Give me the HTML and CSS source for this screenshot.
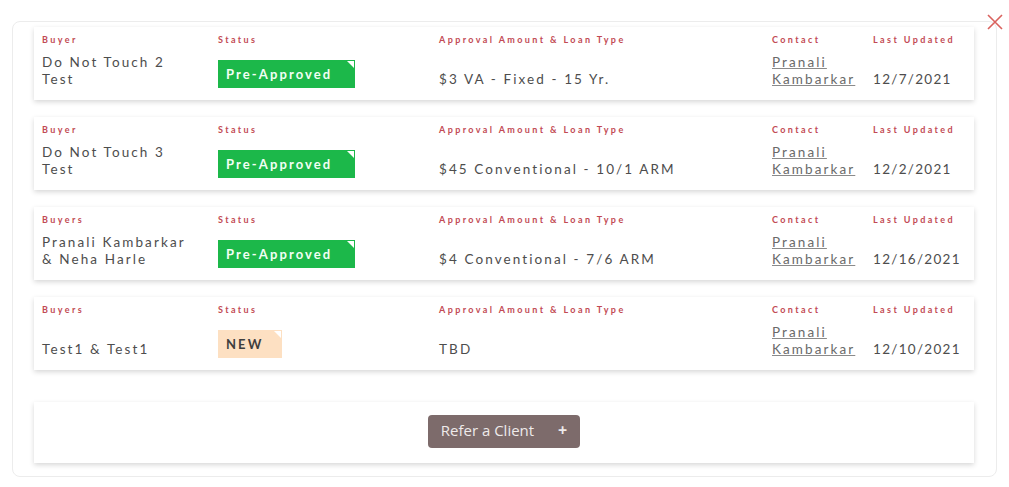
FILE: index.html
```html
<!DOCTYPE html>
<html lang="en">
    <head>
        <meta charset="UTF-8">
        <title>Referrals</title>
        <link rel="stylesheet" href="styles.css">
    </head>
    <body>
        <div class="modal">
            <button class="close-btn" aria-label="Close">
                <svg width="16" height="16" viewBox="0 0 16 16"><path d="M1 1L15 15M15 1L1 15" stroke="#d9625e" stroke-width="1.6" fill="none"/></svg>
            </button>

            <section class="loan-list">
                <div class="loan">
                    <div class="cell">
                        <span class="label">Buyer</span>
                        <span class="value">Do Not Touch 2<br>Test</span>
                    </div>
                    <div class="cell">
                        <span class="label">Status</span>
                        <span class="badge badge-approved">Pre-Approved</span>
                    </div>
                    <div class="cell">
                        <span class="label">Approval Amount &amp; Loan Type</span>
                        <span class="value">$3 VA - Fixed - 15 Yr.</span>
                    </div>
                    <div class="cell">
                        <span class="label">Contact</span>
                        <a class="value contact" href="#">Pranali<br>Kambarkar</a>
                    </div>
                    <div class="cell">
                        <span class="label">Last Updated</span>
                        <span class="value date">12/7/2021</span>
                    </div>
                </div>

                <div class="loan">
                    <div class="cell">
                        <span class="label">Buyer</span>
                        <span class="value">Do Not Touch 3<br>Test</span>
                    </div>
                    <div class="cell">
                        <span class="label">Status</span>
                        <span class="badge badge-approved">Pre-Approved</span>
                    </div>
                    <div class="cell">
                        <span class="label">Approval Amount &amp; Loan Type</span>
                        <span class="value">$45 Conventional - 10/1 ARM</span>
                    </div>
                    <div class="cell">
                        <span class="label">Contact</span>
                        <a class="value contact" href="#">Pranali<br>Kambarkar</a>
                    </div>
                    <div class="cell">
                        <span class="label">Last Updated</span>
                        <span class="value date">12/2/2021</span>
                    </div>
                </div>

                <div class="loan">
                    <div class="cell">
                        <span class="label">Buyers</span>
                        <span class="value">Pranali Kambarkar<br>&amp; Neha Harle</span>
                    </div>
                    <div class="cell">
                        <span class="label">Status</span>
                        <span class="badge badge-approved">Pre-Approved</span>
                    </div>
                    <div class="cell">
                        <span class="label">Approval Amount &amp; Loan Type</span>
                        <span class="value">$4 Conventional - 7/6 ARM</span>
                    </div>
                    <div class="cell">
                        <span class="label">Contact</span>
                        <a class="value contact" href="#">Pranali<br>Kambarkar</a>
                    </div>
                    <div class="cell">
                        <span class="label">Last Updated</span>
                        <span class="value date">12/16/2021</span>
                    </div>
                </div>

                <div class="loan">
                    <div class="cell">
                        <span class="label">Buyers</span>
                        <span class="value">Test1 &amp; Test1</span>
                    </div>
                    <div class="cell">
                        <span class="label">Status</span>
                        <span class="badge badge-new">NEW</span>
                    </div>
                    <div class="cell">
                        <span class="label">Approval Amount &amp; Loan Type</span>
                        <span class="value">TBD</span>
                    </div>
                    <div class="cell">
                        <span class="label">Contact</span>
                        <a class="value contact" href="#">Pranali<br>Kambarkar</a>
                    </div>
                    <div class="cell">
                        <span class="label">Last Updated</span>
                        <span class="value date">12/10/2021</span>
                    </div>
                </div>
            </section>

            <section class="refer-box">
                <button class="refer-btn">Refer a Client <span class="plus">+</span></button>
            </section>
        </div>
    </body>
</html>
```
FILE: styles.css
```css
body {
    margin: 0;
    background-color: white;
    font-family: Lato, "Noto Sans", sans-serif;
}

.modal {
    position: relative;
    margin: 21px 12px 0 12px;
    height: 456px;
    box-sizing: border-box;
    padding: 5px 22px 0 21px;
    border: 1px solid #ececec;
    border-radius: 8px;
}

.close-btn {
    position: absolute;
    top: -8px;
    right: -7px;
    padding: 0;
    border: none;
    background: transparent;
    cursor: pointer;
}

.loan-list {
    display: flex;
    flex-direction: column;
    gap: 17px;
}

.loan {
    display: grid;
    grid-template-columns: 176px 221px 333px 101px 1fr;
    height: 73px;
    box-sizing: border-box;
    padding: 7px 8px 12px 8px;
    background-color: white;
    box-shadow: 0 2px 5px rgba(0,0,0,0.16);
}

.cell {
    display: flex;
    flex-direction: column;
    align-items: flex-start;
}

.label {
    font-size: 9px;
    line-height: 12px;
    font-weight: bold;
    letter-spacing: 2.4px;
    color: #c24a54;
    white-space: nowrap;
}

.value {
    margin-top: auto;
    font-size: 13.5px;
    line-height: 17px;
    letter-spacing: 2.1px;
    color: #4d4d4d;
    white-space: nowrap;
}

.date {
    letter-spacing: 1.3px;
}

.contact {
    color: #6a6a6a;
    text-decoration: underline;
    text-decoration-color: #8a8a8a;
}

.badge {
    position: relative;
    margin-top: auto;
    height: 28px;
    box-sizing: border-box;
    padding: 0 8px;
    font-size: 13px;
    line-height: 28px;
    font-weight: bold;
    letter-spacing: 2.1px;
}

.badge::after {
    content: "";
    position: absolute;
    top: 1px;
    right: 1px;
    border-top: 7px solid white;
    border-left: 7px solid transparent;
}

.badge-approved {
    width: 137px;
    background-color: #1cb84a;
    color: #f2fff4;
}

.badge-new {
    width: 64px;
    background-color: #fde0c2;
    color: #3e3e3e;
}

.refer-box {
    display: flex;
    justify-content: center;
    align-items: center;
    height: 61px;
    margin-top: 32px;
    background-color: white;
    box-shadow: 0 2px 5px rgba(0,0,0,0.16);
}

.refer-btn {
    width: 152px;
    height: 33px;
    margin-bottom: 3px;
    padding-bottom: 3px;
    border: none;
    border-radius: 4px;
    background-color: #7d6b6b;
    color: #eeeaea;
    font-family: "Open Sans", sans-serif;
    font-size: 15px;
    cursor: pointer;
}

.plus {
    margin-left: 20px;
    font-weight: bold;
    font-size: 16px;
}
```
